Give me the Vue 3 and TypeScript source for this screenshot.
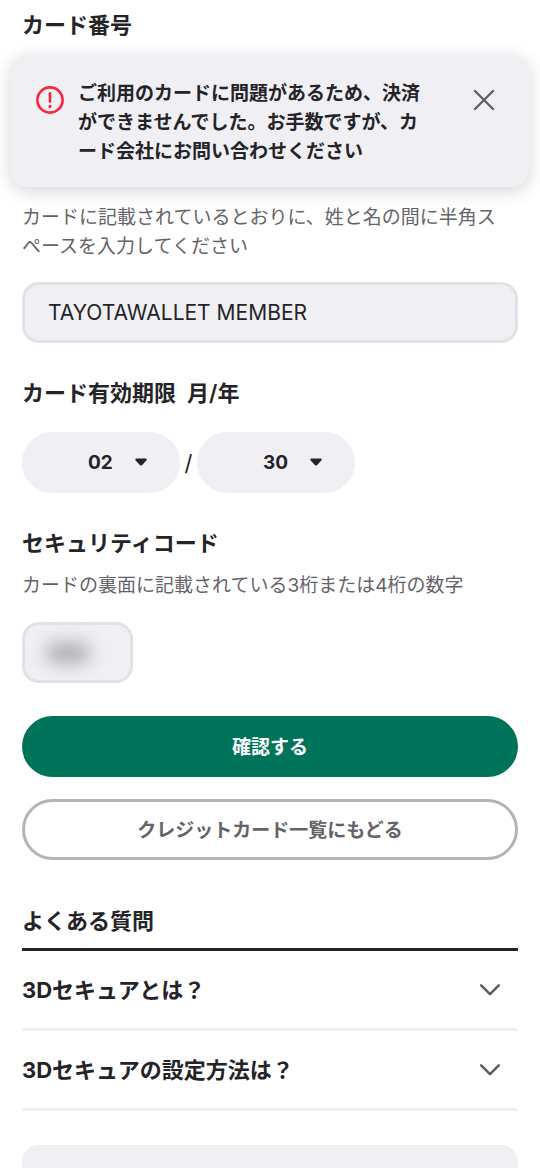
<script setup lang="ts">
import { ref } from 'vue'

const alertOpen = ref(true)
const holder = ref('TAYOTAWALLET MEMBER')
const month = ref('02')
const year = ref('30')
const code = ref('')
const pad = (n: number): string => String(n).padStart(2, '0')
const months = Array.from({ length: 12 }, (_, i) => pad(i + 1))
const years = Array.from({ length: 10 }, (_, i) => pad(i + 25))
const questions: string[] = ['3Dセキュアとは？', '3Dセキュアの設定方法は？']
</script>

<template>
  <main class="page">
    <h2 class="heading">カード番号</h2>

    <div v-if="alertOpen" class="alert" role="alert">
      <svg class="alert-icon" viewBox="0 0 28 28" aria-hidden="true">
        <circle cx="14" cy="14" r="12.6" fill="none" stroke="currentColor" stroke-width="2.6" />
        <path d="M14 7.4v8.2" fill="none" stroke="currentColor" stroke-width="2.6" stroke-linecap="round" />
        <circle cx="14" cy="20.4" r="1.6" fill="currentColor" />
      </svg>
      <p class="alert-text">ご利用のカードに問題があるため、決済ができませんでした。お手数ですが、カード会社にお問い合わせください</p>
      <button class="close" type="button" aria-label="閉じる" @click="alertOpen = false">
        <svg viewBox="0 0 22 22" aria-hidden="true">
          <path d="M2 2l18 18M20 2L2 20" fill="none" stroke="currentColor" stroke-width="2.4" stroke-linecap="round" />
        </svg>
      </button>
    </div>

    <form class="form" @submit.prevent>
      <label class="help" for="holder">カードに記載されているとおりに、姓と名の間に半角スペースを入力してください</label>
      <input id="holder" v-model="holder" class="field holder" type="text" />

      <h2 class="heading">カード有効期限&nbsp; 月/年</h2>
      <div class="expiry">
        <div class="picker">
          <select v-model="month" class="select" aria-label="月">
            <option v-for="m in months" :key="m" :value="m">{{ m }}</option>
          </select>
          <svg class="caret" viewBox="0 0 12 8" aria-hidden="true">
            <path d="M1.2.5h9.6q1.5.9.5 2.1L7.2 7q-1.2 1.1-2.4 0L.7 2.6Q-.3 1.4 1.2.5z" fill="currentColor" />
          </svg>
        </div>
        <span class="slash">/</span>
        <div class="picker">
          <select v-model="year" class="select" aria-label="年">
            <option v-for="y in years" :key="y" :value="y">{{ y }}</option>
          </select>
          <svg class="caret" viewBox="0 0 12 8" aria-hidden="true">
            <path d="M1.2.5h9.6q1.5.9.5 2.1L7.2 7q-1.2 1.1-2.4 0L.7 2.6Q-.3 1.4 1.2.5z" fill="currentColor" />
          </svg>
        </div>
      </div>

      <h2 class="heading">セキュリティコード</h2>
      <label class="help hint" for="code">カードの裏面に記載されている3桁または4桁の数字</label>
      <div class="code">
        <input id="code" v-model="code" class="field" type="password" maxlength="4" />
        <span class="mask" aria-hidden="true"></span>
      </div>

      <button class="button primary" type="submit">確認する</button>
      <button class="button secondary" type="button">クレジットカード一覧にもどる</button>
    </form>

    <section>
      <h2 class="heading faq-title">よくある質問</h2>
      <button v-for="q in questions" :key="q" class="question" type="button">
        <span class="question-text">{{ q }}</span>
        <svg class="chevron" viewBox="0 0 22 14" aria-hidden="true">
          <path d="M2.2 2.4L11 11.2l8.800-8.800" fill="none" stroke="currentColor" stroke-width="2.6" stroke-linecap="round" stroke-linejoin="round" />
        </svg>
      </button>
    </section>

    <div class="panel"></div>
  </main>
</template>

<style>
body {
  margin: 0;
  background: #fff;
}
</style>

<style scoped>
* {
  box-sizing: border-box;
}
.page {
  display: flex;
  flex-direction: column;
  min-height: 100vh;
  padding: 8px 22px 0;
  color: #242428;
  font-family: Inter, "Noto Sans CJK JP", sans-serif;
}
button,
input,
select {
  margin: 0;
  color: inherit;
  font-family: inherit;
}
button {
  cursor: pointer;
}
.heading {
  margin: 0;
  font-size: 22px;
  line-height: 34px;
  font-weight: 600;
}
.alert {
  display: flex;
  align-items: flex-start;
  margin: 13px -11px 0;
  padding: 24px 33px 21px 25px;
  border-radius: 17px;
  background: #f0eff4;
  box-shadow: 0 4px 18px rgba(0, 0, 0, 0.17);
}
.alert-icon {
  flex: none;
  width: 28px;
  height: 28px;
  margin: 7px 14px 0 0;
  color: #fa243c;
}
.alert-text {
  flex: 1;
  margin: 0;
  padding-right: 45px;
  font-size: 19px;
  line-height: 29px;
  font-weight: 600;
}
.close {
  flex: none;
  width: 24px;
  height: 24px;
  margin-top: 9px;
  padding: 1px;
  border: 0;
  background: none;
  color: #5f5e64;
}
.close svg {
  display: block;
}
.form {
  display: flex;
  flex-direction: column;
}
.form .heading {
  margin-top: 33px;
}
.help {
  margin-top: 16px;
  padding-right: 12px;
  color: #646369;
  font-size: 19px;
  line-height: 29px;
}
.hint {
  margin-top: 11px;
}
.field {
  display: block;
  width: 100%;
  height: 61px;
  padding: 0 23px;
  border: 3px solid #e2e1e8;
  border-radius: 17px;
  background: #f0eff4;
  font-size: 21px;
}
.holder {
  margin-top: 21px;
}
.expiry {
  display: flex;
  align-items: center;
  margin-top: 22px;
}
.picker {
  position: relative;
  width: 158px;
}
.select {
  display: block;
  width: 100%;
  height: 61px;
  padding: 0 0 0 66px;
  border: 0;
  border-radius: 31px;
  background: #f0eff4;
  appearance: none;
  font-size: 19px;
  font-weight: 700;
}
.caret {
  position: absolute;
  top: 26px;
  right: 33px;
  width: 12px;
  height: 8px;
  pointer-events: none;
}
.slash {
  width: 17px;
  font-size: 22px;
  text-align: center;
}
.code {
  position: relative;
  width: 111px;
  margin-top: 22px;
}
.mask {
  position: absolute;
  top: 21px;
  left: 24px;
  width: 44px;
  height: 20px;
  border-radius: 10px;
  background: #a8aaac;
  filter: blur(9px);
  pointer-events: none;
}
.button {
  height: 61px;
  padding: 0 0 3px;
  border-radius: 31px;
  font-size: 19px;
  font-weight: 600;
}
.primary {
  margin-top: 33px;
  border: 0;
  background: #00745a;
  color: #fff;
}
.secondary {
  margin-top: 22px;
  border: 3px solid #b4b3ba;
  background: #fff;
  color: #646369;
}
.faq-title {
  margin-top: 44px;
  padding-bottom: 10px;
  border-bottom: 3px solid #242428;
}
.question {
  display: flex;
  align-items: center;
  justify-content: space-between;
  width: 100%;
  height: 80px;
  padding: 1px 17px 0 0;
  border: 0;
  border-bottom: 3px solid #f0eff4;
  background: none;
  font-size: 22px;
  font-weight: 700;
  text-align: left;
}
.question-text {
  padding-bottom: 5px;
}
.chevron {
  flex: none;
  width: 22px;
  height: 14px;
  color: #5f5e64;
}
.panel {
  flex: 1;
  min-height: 20px;
  margin-top: 34px;
  border-radius: 17px 17px 0 0;
  background: #f0eff4;
}
</style>
